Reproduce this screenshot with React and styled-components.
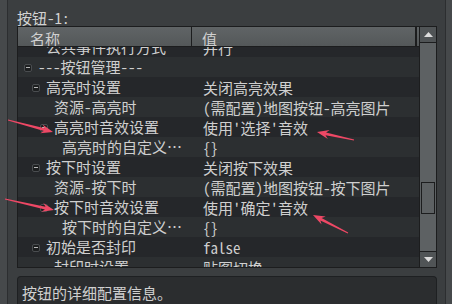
import React from 'react';
import styled, { createGlobalStyle } from 'styled-components';

// page 452w 304h
// table 17..437 x, 26..267 y ; header 20h ; rows 20h ; scrollbar 16w

const GlobalStyle = createGlobalStyle`
  html, body {
    margin: 0;
    padding: 0;
    background: #3b3e40;
    overflow: hidden;
  }
  body {
    font-family: "Noto Sans Mono CJK SC", "Noto Sans CJK SC", "DejaVu Sans Mono", monospace;
    font-size: 15px;
    color: #cfcfcf;
  }
`;

const Window = styled.div`
  position: relative;
  display: flex;
  width: 452px;
  height: 304px;
  overflow: hidden;
  background: #3b3e40;
`;

const SideStrip = styled.div`
  flex: none;
  width: ${(p) => p.$w}px;
  background: #46494b;
  border-${(p) => (p.$right ? 'left' : 'right')}: 1px solid #2c2e30;
`;

const Main = styled.div`
  flex: 1;
  min-width: 0;
  display: flex;
  flex-direction: column;
  padding: 9px 8px 0 9px;
`;

const Label = styled.div`
  height: 17px;
  line-height: 17px;
  color: #d2d2d2;
`;

const Table = styled.div`
  display: flex;
  height: 242px;
  border: 1px solid #1c1d1e;
  box-sizing: border-box;
  background: #26282a;
`;

const Content = styled.div`
  flex: 1;
  min-width: 0;
  display: flex;
  flex-direction: column;
`;

const Header = styled.div`
  display: flex;
  height: 19px;
  border-bottom: 1px solid #1c1d1e;
  background: linear-gradient(#606466, #545859);
`;

const HeadCell = styled.div`
  box-sizing: border-box;
  width: ${(p) => (p.$w ? `${p.$w}px` : 'auto')};
  flex: ${(p) => (p.$w ? 'none' : '1')};
  padding-left: ${(p) => p.$pad}px;
  line-height: 24px;
  height: 19px;
  overflow: hidden;
  color: #d0d0d0;
  border-right: 1px solid #1c1d1e;
  &:last-child {
    border-right: none;
  }
`;

const HeadTail = styled.div`
  width: 1px;
  border-left: 1px solid #1c1d1e;
  margin-right: 1px;
`;

const Body = styled.div`
  flex: 1;
  overflow: hidden;
`;

const List = styled.div`
  margin-top: -10px;
`;

const Row = styled.div`
  display: flex;
  height: 20px;
  line-height: 22px;
  background: ${(p) => (p.$alt ? '#2c2f31' : '#25272a')};
  white-space: nowrap;
`;

const NameCell = styled.div`
  flex: none;
  width: 174px;
  display: flex;
  align-items: center;
  padding-left: ${(p) => 6 + p.$level * 8}px;
  box-sizing: border-box;
  overflow: hidden;
`;

const ValueCell = styled.div`
  flex: 1;
  padding-left: 11px;
  overflow: hidden;
`;

const Toggle = styled.span`
  flex: none;
  position: relative;
  width: 8px;
  height: 8px;
  margin-right: 6px;
  margin-top: 1px;
  border: 1px solid #4a4d50;
  border-radius: 2px;
  background: #1d1f20;
  box-sizing: border-box;
  visibility: ${(p) => (p.$show ? 'visible' : 'hidden')};
  &::after {
    content: '';
    position: absolute;
    left: 1px;
    right: 1px;
    top: 2px;
    height: 1px;
    background: #b8b8b8;
  }
`;

const Text = styled.span`
  line-height: 20px;
`;

const Scrollbar = styled.div`
  flex: none;
  width: 16px;
  display: flex;
  flex-direction: column;
  border-left: 1px solid #1c1d1e;
  background: #5d6163;
`;

const ScrollButton = styled.div`
  height: 15px;
  display: flex;
  align-items: center;
  justify-content: center;
  background: #505456;
  border-${(p) => (p.$down ? 'top' : 'bottom')}: 1px solid #1c1d1e;
`;

const Track = styled.div`
  flex: 1;
  display: flex;
  flex-direction: column;
`;

const Thumb = styled.div`
  width: 14px;
  height: 32px;
  margin-left: 1px;
  border: 1px solid #1c1d1e;
  box-sizing: border-box;
  background: #5d6163;
`;

const Desc = styled.div`
  margin-top: 8px;
  flex: 1;
  border: 1px solid #1e2022;
  border-bottom: none;
  border-radius: 4px 4px 0 0;
  background: #2b2d2f;
  padding: 6px 0 0 4px;
  line-height: 20px;
  color: #d0d0d0;
`;

const Overlay = styled.svg`
  position: absolute;
  left: 0;
  top: 0;
  pointer-events: none;
`;

const rows = [
  { level: 1, name: '公共事件执行方式', value: '并行' },
  { level: 0, toggle: true, name: '---按钮管理---', value: '' },
  { level: 1, toggle: true, name: '高亮时设置', value: '关闭高亮效果' },
  { level: 2, name: '资源-高亮时', value: '(需配置)地图按钮-高亮图片' },
  { level: 2, toggle: true, name: '高亮时音效设置', value: "使用'选择'音效" },
  { level: 3, name: '高亮时的自定义…', value: '{}' },
  { level: 1, toggle: true, name: '按下时设置', value: '关闭按下效果' },
  { level: 2, name: '资源-按下时', value: '(需配置)地图按钮-按下图片' },
  { level: 2, toggle: true, name: '按下时音效设置', value: "使用'确定'音效" },
  { level: 3, name: '按下时的自定义…', value: '{}' },
  { level: 1, toggle: true, name: '初始是否封印', value: 'false' },
  { level: 2, name: '封印时设置', value: '贴图切换' },
];

const arrows = [
  [8, 120, 53, 132],
  [354, 140, 317, 132],
  [5, 199, 54, 210],
  [348, 233, 313, 215],
];

function arrowPoints(x1, y1, x2, y2) {
  const len = Math.hypot(x2 - x1, y2 - y1);
  const dx = (x2 - x1) / len;
  const dy = (y2 - y1) / len;
  const nx = -dy;
  const ny = dx;
  const at = (back, side) => [x2 - dx * back + nx * side, y2 - dy * back + ny * side];
  const pts = [
    [x1 + nx * 0.5, y1 + ny * 0.5],
    at(9, 1.4),
    at(12, 4.5),
    [x2, y2],
    at(12, -4.5),
    at(9, -1.4),
    [x1 - nx * 0.5, y1 - ny * 0.5],
  ];
  return pts.map((p) => p.map((v) => v.toFixed(1)).join(',')).join(' ');
}

function Triangle({ down }) {
  return (
    <svg width="9" height="5" viewBox="0 0 9 5">
      <polygon points={down ? '0,0 9,0 4.5,5' : '0,5 9,5 4.5,0'} fill="#dcdcdc" />
    </svg>
  );
}

export default function App() {
  return (
    <Window>
      <GlobalStyle />
      <SideStrip $w={7} />
      <Main>
        <Label>按钮-1:</Label>
        <Table>
          <Content>
            <Header>
              <HeadCell $w={174} $pad={12}>名称</HeadCell>
              <HeadCell $pad={10}>值</HeadCell>
              <HeadTail />
            </Header>
            <Body>
              <List>
                {rows.map((r, i) => (
                  <Row key={i} $alt={i % 2 === 1}>
                    <NameCell $level={r.level}>
                      <Toggle $show={r.toggle} />
                      <Text>{r.name}</Text>
                    </NameCell>
                    <ValueCell>{r.value}</ValueCell>
                  </Row>
                ))}
              </List>
            </Body>
          </Content>
          <Scrollbar>
            <ScrollButton>
              <Triangle />
            </ScrollButton>
            <Track>
              <Thumb style={{ marginTop: 139 }} />
            </Track>
            <ScrollButton $down>
              <Triangle down />
            </ScrollButton>
          </Scrollbar>
        </Table>
        <Desc>按钮的详细配置信息。</Desc>
      </Main>
      <SideStrip $w={6} $right />
      <Overlay width="452" height="304">
        {arrows.map((a, i) => (
          <polygon key={i} points={arrowPoints(...a)} fill="#ee4865" />
        ))}
      </Overlay>
    </Window>
  );
}
